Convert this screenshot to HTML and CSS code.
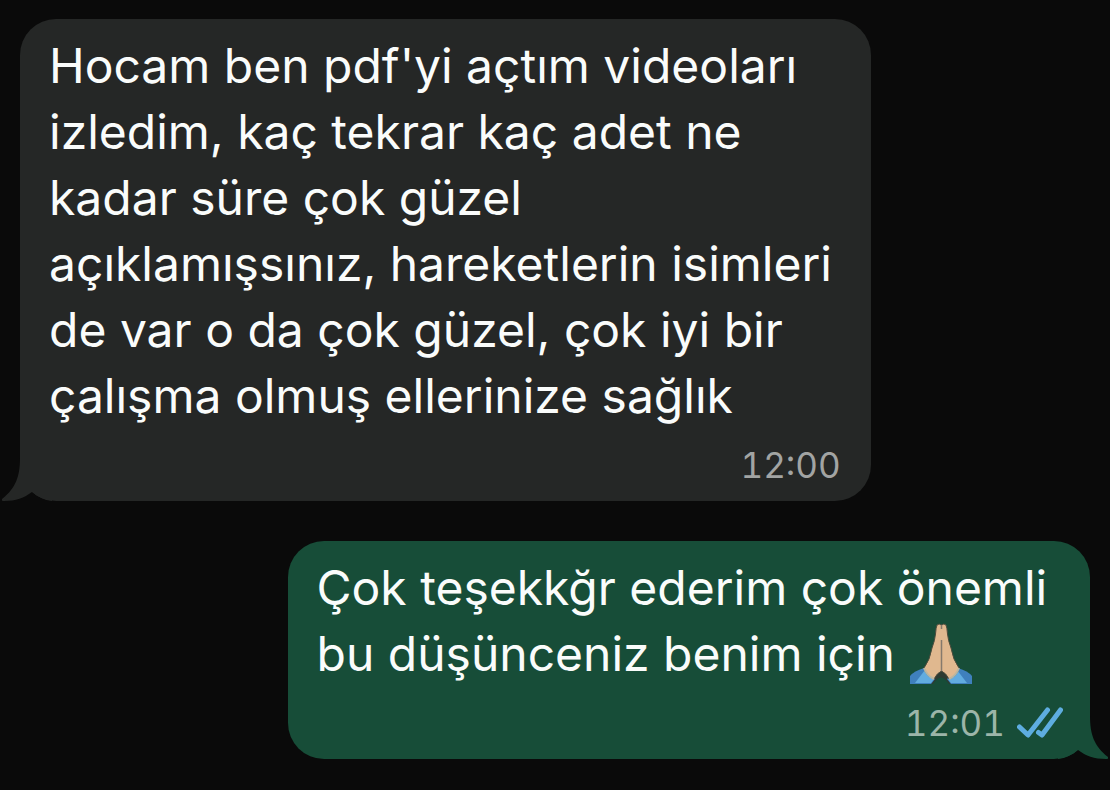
FILE: index.html
```
<!DOCTYPE html>
<html lang="tr">
<head>
	<meta charset="UTF-8">
	<meta name="viewport" content="width=device-width, initial-scale=1">
	<title>Sohbet</title>
	<link rel="stylesheet" href="styles.css">
</head>
<body>
	<main class="chat">
		<article class="bubble incoming">
			<p class="text">Hocam ben pdf'yi açtım videoları izledim, kaç tekrar kaç adet ne kadar süre çok güzel açıklamışsınız, hareketlerin isimleri de var o da çok güzel, çok iyi bir çalışma olmuş ellerinize sağlık</p>
			<footer class="meta">
				<time datetime="12:00">12:00</time>
			</footer>
			<svg class="tail" viewBox="0 0 50 60" aria-hidden="true">
				<path d="M18 0V17C18 35 14 47 0 58C-1 59 0 60 2 60C14 60 22 57 30 51C36 56 42 59 50 60V0Z"/>
			</svg>
		</article>

		<article class="bubble outgoing">
			<p class="text">Çok teşekkğr ederim çok önemli bu düşünceniz benim için <svg class="emoji" viewBox="0 0 62 62" role="img" aria-label="dua eden eller">
				<path fill="#2d3b32" d="M18 61L31 46L44 61L39 61Q31 48 23 61Z"/>
				<path fill="#3f80bd" d="M0 61V53Q4 48 14 45L25 56L21 61Z"/>
				<path fill="#62ace0" d="M5 60L15 47L24 56L21 60Z"/>
				<path fill="#3f80bd" d="M62 61V53Q58 48 48 45L37 56L41 61Z"/>
				<path fill="#62ace0" d="M57 60L47 47L38 56L41 60Z"/>
				<path fill="#e0b88f" stroke="#4c4b3c" d="M31.500 2Q29 0 27 2Q26 4 25.500 11Q25 17 22 25Q20 37 14 45Q16 53 24 56Q27 50 31.500 48Q36 50 39 56Q47 53 49 45Q43 37 41 25Q38 17 37.500 11Q37 4 36 2Q34 0 31.500 2Z"/>
				<path fill="none" stroke="#b8b6a2" stroke-width="2" d="M14 45Q17 53 24 56M49 45Q46 53 39 56"/>
				<path fill="none" stroke="#85796c" stroke-width="1.500" d="M31.500 2V6M31.500 17V48"/>
			</svg></p>
			<footer class="meta">
				<time datetime="12:01">12:01</time>
				<svg class="ticks" viewBox="0 0 46 32" role="img" aria-label="okundu">
					<path d="M2.500 20L11 28L30.500 3M21.500 25.500L25 28L43.500 3"/>
				</svg>
			</footer>
			<svg class="tail" viewBox="0 0 50 60" aria-hidden="true">
				<path d="M18 0V17C18 35 14 47 0 58C-1 59 0 60 2 60C14 60 22 57 30 51C36 56 42 59 50 60V0Z"/>
			</svg>
		</article>
	</main>
</body>
</html>
```
FILE: styles.css
```
* {
    margin: 0;
    padding: 0;
    box-sizing: border-box;
}

body {
    background: #0a0a0a;
    font-family: Inter, "Noto Sans", sans-serif;
}

.chat {
    display: flex;
    flex-direction: column;
    gap: 40px;
    padding: 19px 20px 31px;
}

.bubble {
    position: relative;
    z-index: 0;
    padding: 14px 30px 14px 29px;
    border-radius: 36px;
}

.incoming {
    align-self: flex-start;
    width: 79.5%;
    background: #252726;
    color: #252726;
}

.outgoing {
    align-self: flex-end;
    width: 75%;
    padding-right: 27px;
    background: #174d38;
    color: #174d38;
}

.text {
    color: #fafcfb;
    font-size: 48px;
    line-height: 66px;
}

.emoji {
    width: 62px;
    height: 62px;
    margin: -8px 0 -8px 2px;
    vertical-align: -6px;
}

.meta {
    display: flex;
    justify-content: flex-end;
    align-items: center;
    gap: 12px;
    margin-top: 14px;
    color: #a2a4a3;
    font-size: 35px;
    font-variant-numeric: tabular-nums;
    line-height: 44px;
}

.outgoing .meta {
    color: #9cb5a9;
}

.ticks {
    width: 46px;
    height: 32px;
    fill: none;
    stroke: #5eade0;
    stroke-width: 5;
    stroke-linecap: round;
    stroke-linejoin: round;
}

/* bubble tails, kept under the text and ticks */
.tail {
    position: absolute;
    z-index: -1;
    bottom: 0;
    left: -18px;
    width: 50px;
    height: 60px;
    fill: currentColor;
}

.outgoing .tail {
    right: -18px;
    left: auto;
    transform: scaleX(-1);
}
```
